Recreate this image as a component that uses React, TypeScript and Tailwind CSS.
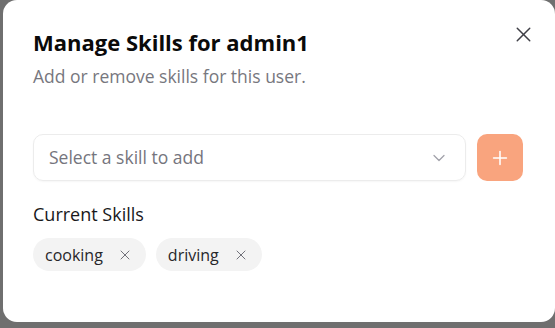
import React from "react";
import { X, ChevronDown, Plus } from "lucide-react";

const skills = ["cooking", "driving"];

const App: React.FC = () => {
  return (
    <div
      className="w-[555px] h-[328px] bg-[#6f6f6f] pl-[3px] pb-[6px] flex"
      style={{ fontFamily: '"Open Sans", "Noto Sans", sans-serif' }}
    >
      <div className="relative flex-1 bg-white rounded-[14px] pl-[30px] pr-[32px] pt-[27px]">
        <button className="absolute top-[22px] right-[19px] text-[#3f3f46]" aria-label="Close">
          <X className="w-[25px] h-[25px]" strokeWidth={1.4} />
        </button>

        <h2 className="text-[22px] leading-[30px] font-bold text-[#0a0a0a]">
          Manage Skills for admin1
        </h2>
        <p className="mt-[7px] text-[17.5px] leading-[24px] text-[#77777e]">
          Add or remove skills for this user.
        </p>

        <div className="mt-[46px] flex items-center gap-[11px]">
          <div className="flex-1 h-[47px] rounded-[10px] border border-[#ececec] flex items-center justify-between pl-[15px] pr-[16px] shadow-[0_1px_2px_rgba(0,0,0,0.04)]">
            <span className="text-[17.5px] text-[#75757d]">Select a skill to add</span>
            <ChevronDown className="w-[20px] h-[20px] text-[#a1a1aa]" strokeWidth={1.5} />
          </div>
          <button className="w-[46px] h-[47px] rounded-[10px] bg-[#f9a47e] flex items-center justify-center text-white">
            <Plus className="w-[22px] h-[22px]" strokeWidth={1.7} />
          </button>
        </div>

        <div className="mt-[21px] text-[18px] leading-[24px] text-[#18181b]">Current Skills</div>

        <div className="mt-[12px] flex gap-[10px]">
          {skills.map((s) => (
            <span
              key={s}
              className="h-[33px] rounded-full bg-[#f3f3f3] flex items-center pl-[12px] pr-[13px] gap-[14px] text-[16px] text-[#27272a]"
            >
              {s}
              <X className="w-[16px] h-[16px] text-[#71717a]" strokeWidth={1.5} />
            </span>
          ))}
        </div>
      </div>
    </div>
  );
};

export default App;
